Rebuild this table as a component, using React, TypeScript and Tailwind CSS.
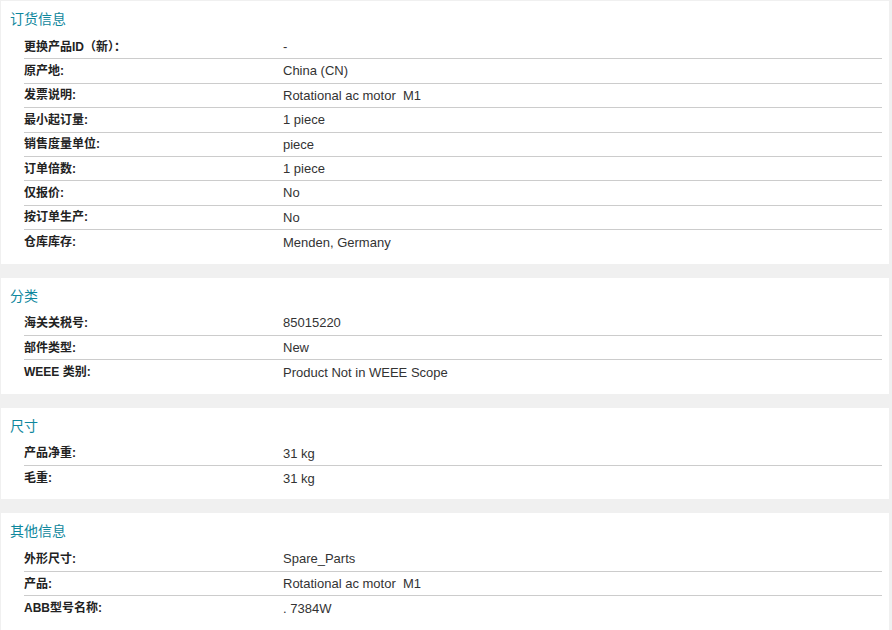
import React from 'react';

type Row = [string, string];

const sections: { title: string; rows: Row[] }[] = [
  {
    title: '订货信息',
    rows: [
      ['更换产品ID（新）：', '-'],
      ['原产地:', 'China (CN)'],
      ['发票说明:', 'Rotational ac motor\u00a0\u00a0M1'],
      ['最小起订量:', '1 piece'],
      ['销售度量单位:', 'piece'],
      ['订单倍数:', '1 piece'],
      ['仅报价:', 'No'],
      ['按订单生产:', 'No'],
      ['仓库库存:', 'Menden, Germany'],
    ],
  },
  {
    title: '分类',
    rows: [
      ['海关关税号:', '85015220'],
      ['部件类型:', 'New'],
      ['WEEE 类别:', 'Product Not in WEEE Scope'],
    ],
  },
  {
    title: '尺寸',
    rows: [
      ['产品净重:', '31 kg'],
      ['毛重:', '31 kg'],
    ],
  },
  {
    title: '其他信息',
    rows: [
      ['外形尺寸:', 'Spare_Parts'],
      ['产品:', 'Rotational ac motor\u00a0\u00a0M1'],
      ['ABB型号名称:', '. 7384W'],
    ],
  },
];

const cjk = { fontFamily: '"Liberation Sans", "Noto Sans CJK SC", sans-serif' };

const App = () => {
  return (
    <div className="min-h-screen bg-[#f0f0f0] pl-[1px] pr-[3px] pt-[1px] pb-[3px] flex flex-col gap-[14px]" style={cjk}>
      {sections.map((section) => (
        <section key={section.title} className="bg-white pl-[23px] pr-[7px] pb-[9px]">
          <h2 className="-ml-[14px] pt-[8px] mb-[6px] text-[14px] leading-[20px] text-[#0f879d]">{section.title}</h2>
          <div>
            {section.rows.map(([label, value], i) => (
              <div
                key={label}
                className={`flex items-center h-[24.4px] ${i < section.rows.length - 1 ? 'border-b border-[#cccccc]' : ''}`}
              >
                <div className="w-[259px] shrink-0 text-[12px] font-bold text-[#222]">{label}</div>
                <div className="text-[13px] text-[#333]">{value}</div>
              </div>
            ))}
          </div>
        </section>
      ))}
    </div>
  );
};

export default App;
